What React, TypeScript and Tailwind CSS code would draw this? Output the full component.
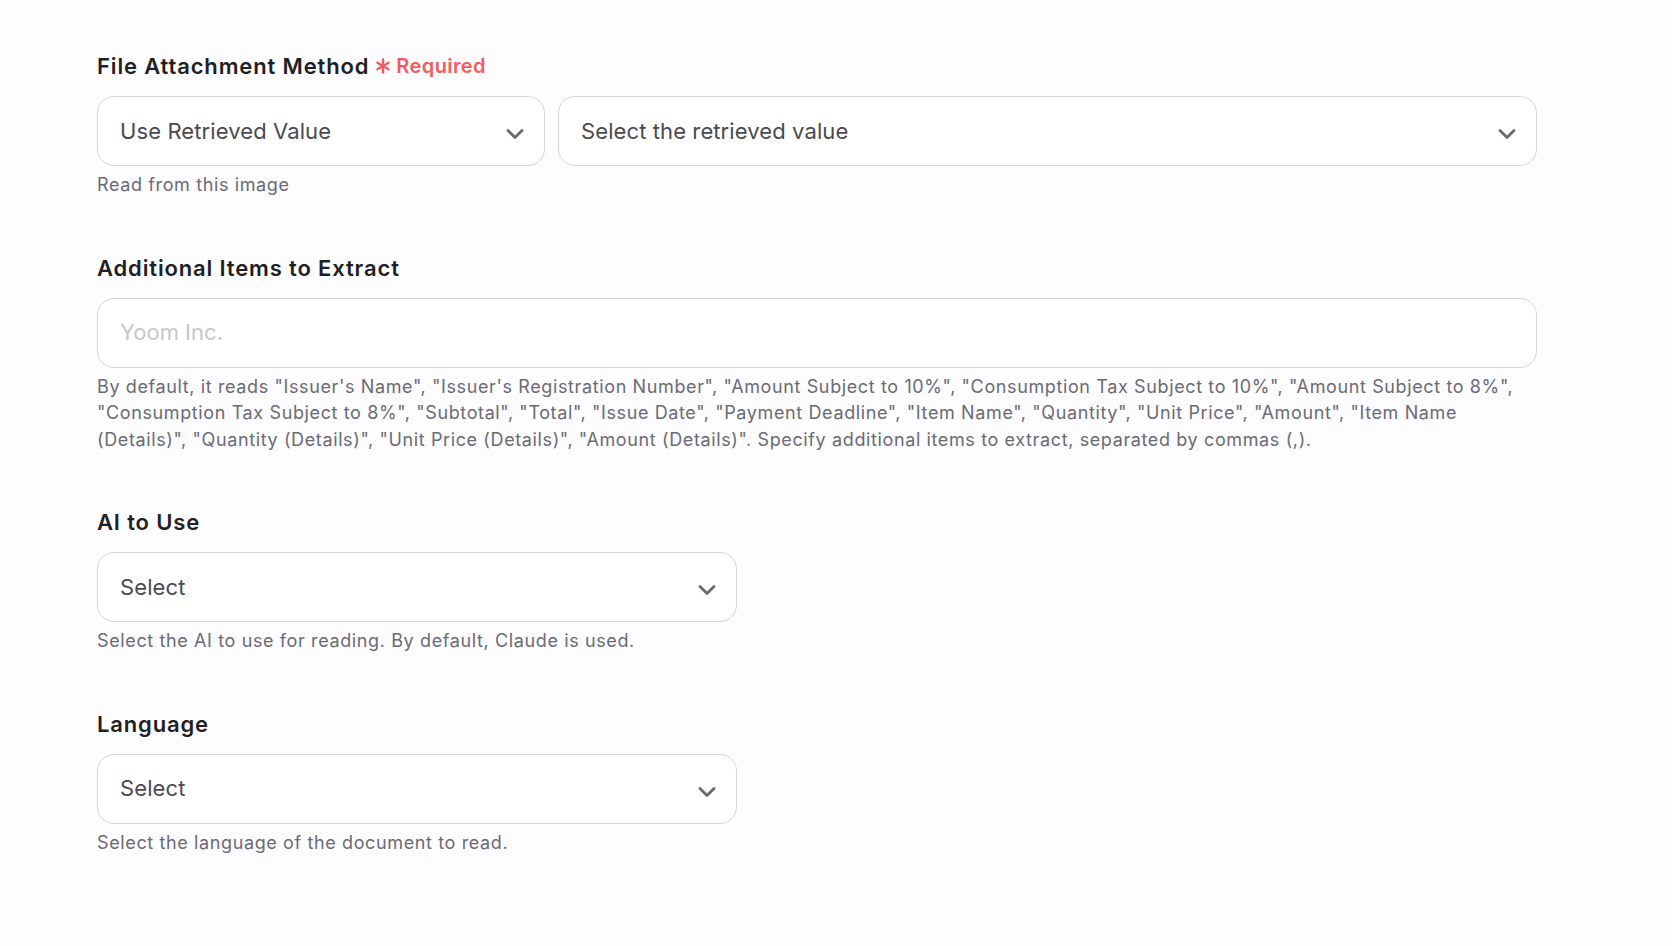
import React from "react";

const Chevron = () => (
  <svg width="20" height="12" viewBox="0 0 20 12" fill="none" className="shrink-0 translate-y-[3px]">
    <polyline points="3,2.5 10,9.5 17,2.5" stroke="#68686e" strokeWidth="2.8" strokeLinecap="round" strokeLinejoin="round" />
  </svg>
);

const Asterisk = () => (
  <svg width="16" height="16" viewBox="0 0 16 16" fill="none" className="shrink-0">
    <g stroke="#f25c5c" strokeWidth="2.4" strokeLinecap="round">
      <line x1="8" y1="1.5" x2="8" y2="14.5" />
      <line x1="2.4" y1="4.75" x2="13.6" y2="11.25" />
      <line x1="2.4" y1="11.25" x2="13.6" y2="4.75" />
    </g>
  </svg>
);

const SelectBox = ({ label, className }: { label: string; className: string }) => (
  <div className={`h-[70px] rounded-[17px] border border-[#d5d5de] bg-white flex items-center justify-between pl-[22px] pr-[19px] ${className}`}>
    <span className="text-[22px] text-[#4a4a50] tracking-[0.1px]">{label}</span>
    <Chevron />
  </div>
);

const Title = ({ children }: { children: React.ReactNode }) => (
  <div className="text-[22px] leading-[28px] font-semibold text-[#1f1f24] tracking-[0.85px] mb-[16px] flex items-center">{children}</div>
);

const Help = ({ children }: { children: React.ReactNode }) => (
  <p className="mt-[6px] text-[18px] leading-[26.5px] text-[#6b6b72] tracking-[0.62px]">{children}</p>
);

export default function App() {
  return (
    <div className="min-h-[946px] w-full bg-[#fdfcff]" style={{ fontFamily: "Inter, 'Noto Sans', sans-serif" }}>
      <div className="pl-[97px] pt-[52px] w-[1537px] flex flex-col gap-[55px]">
        <section>
          <Title>
            <span>File Attachment Method</span>
            <span className="ml-[6px] mr-[5px] flex items-center">
              <Asterisk />
            </span>
            <span className="text-[20px] text-[#f25c5c] font-semibold tracking-[0.4px]">Required</span>
          </Title>
          <div className="flex gap-[13px]">
            <SelectBox label="Use Retrieved Value" className="w-[448px]" />
            <SelectBox label="Select the retrieved value" className="flex-1" />
          </div>
          <Help>Read from this image</Help>
        </section>

        <section>
          <Title>Additional Items to Extract</Title>
          <div className="h-[70px] rounded-[17px] border border-[#d5d5de] bg-white flex items-center pl-[22px]">
            <span className="text-[22px] text-[#c6c6cc]">Yoom Inc.</span>
          </div>
          <Help>
            By default, it reads "Issuer's Name", "Issuer's Registration Number", "Amount Subject to 10%", "Consumption Tax Subject to 10%", "Amount Subject to 8%", "Consumption Tax Subject to 8%", "Subtotal", "Total", "Issue Date", "Payment Deadline", "Item Name", "Quantity", "Unit Price", "Amount", "Item Name (Details)", "Quantity (Details)", "Unit Price (Details)", "Amount (Details)". Specify additional items to extract, separated by commas (,).
          </Help>
        </section>

        <section>
          <Title>AI to Use</Title>
          <SelectBox label="Select" className="w-[640px]" />
          <Help>Select the AI to use for reading. By default, Claude is used.</Help>
        </section>

        <section>
          <Title>Language</Title>
          <SelectBox label="Select" className="w-[640px]" />
          <Help>Select the language of the document to read.</Help>
        </section>
      </div>
    </div>
  );
}
